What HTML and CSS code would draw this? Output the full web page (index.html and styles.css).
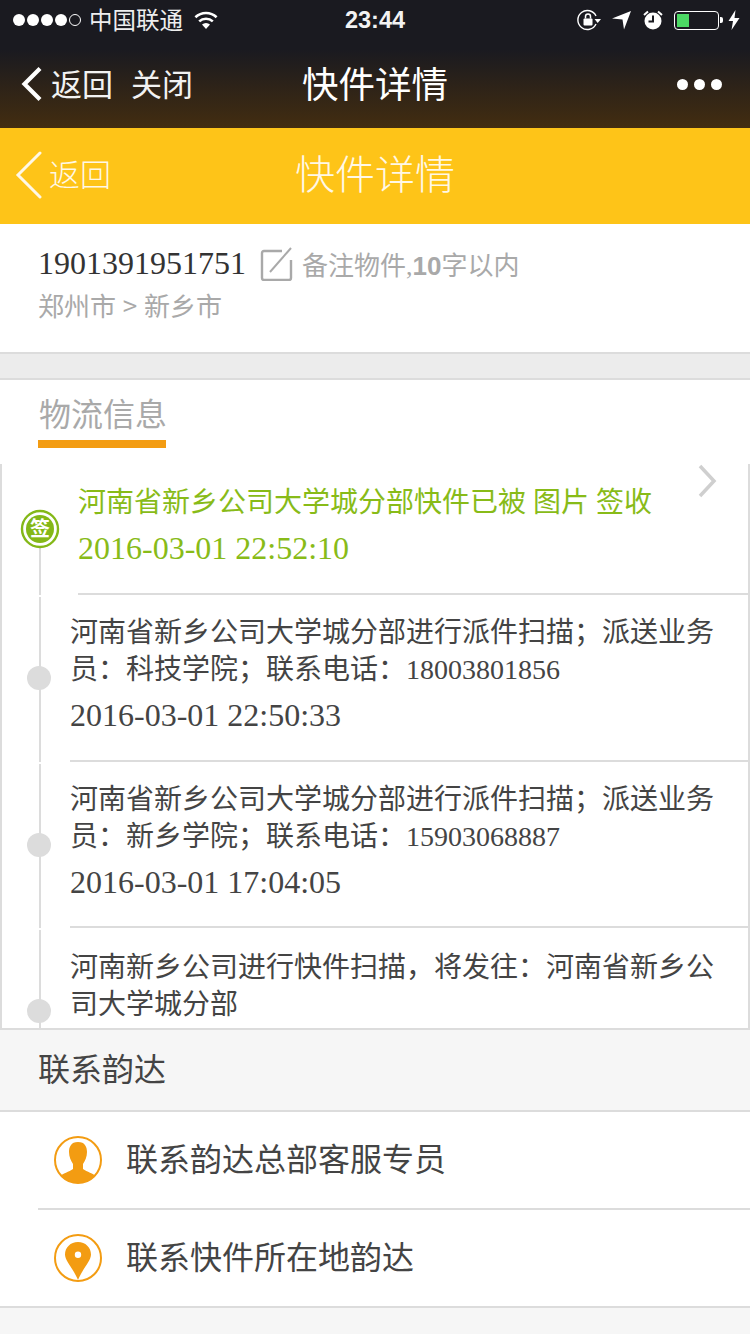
FILE: index.html
```html
<!DOCTYPE html>
<html lang="zh-CN">
<head>
    <meta charset="UTF-8">
    <meta name="viewport" content="width=device-width, initial-scale=1.0">
    <title>快件详情</title>
    <link rel="stylesheet" href="styles.css">
</head>
<body>
    <div class="topbar">
        <div class="statusbar">
            <div class="status-left">
                <span class="signal"><i></i><i></i><i></i><i></i><i class="off"></i></span>
                <span class="carrier">中国联通</span>
                <svg class="wifi" width="26" height="20" viewBox="0 0 26 20"><path d="M13 19 L9 14.5 A6 6 0 0 1 17 14.5 Z" fill="#fff"/><path d="M6.2 11.4 A10 10 0 0 1 19.8 11.4" fill="none" stroke="#fff" stroke-width="2.6"/><path d="M2.4 7.2 A15.5 15.5 0 0 1 23.6 7.2" fill="none" stroke="#fff" stroke-width="2.6"/></svg>
            </div>
            <div class="status-time">23:44</div>
            <div class="status-right">
                <svg width="24" height="22" viewBox="0 0 24 22"><path d="M19 15 A9.5 9.5 0 1 1 19 7" fill="none" stroke="#fff" stroke-width="1.4"/><rect x="6.5" y="9.5" width="9" height="7" rx="1" fill="#fff"/><path d="M8.500 9.500 V7.500 A2.500 2.500 0 0 1 13.500 7.500 V9.500" fill="none" stroke="#fff" stroke-width="1.5"/><path d="M17.500 10 H24 L20.700 14 Z" fill="#fff"/></svg>
                <svg width="20" height="20" viewBox="0 0 20 20"><path d="M0 8.500 L19 1 L12 19.500 L10.500 9.500 Z" fill="#fff"/></svg>
                <svg width="20" height="20" viewBox="0 0 20 20"><circle cx="10" cy="11" r="8.500" fill="#fff"/><path d="M10 5.500 V11.500 H5.500" fill="none" stroke="#1a1a20" stroke-width="2"/><path d="M1 5 L5 1.500 M19 5 L15 1.500" stroke="#fff" stroke-width="2"/></svg>
                <span class="battery"><span class="battery-level"></span></span>
                <svg class="bolt" width="12" height="20" viewBox="0 0 12 20"><path d="M7.500 0 L0.500 11 H5 L3.500 20 L11.500 8 H6.500 Z" fill="#fff"/></svg>
            </div>
        </div>
        <div class="navbar">
            <div class="nav-left">
                <svg width="24" height="36" viewBox="0 0 24 36"><path d="M20 2.500 L4.500 18 L20 33.500" fill="none" stroke="#fff" stroke-width="4.200"/></svg>
                <span class="nav-back">返回</span>
                <span>关闭</span>
            </div>
            <div class="nav-title">快件详情</div>
            <div class="nav-more"><i></i><i></i><i></i></div>
        </div>
    </div>

    <header class="page-header">
        <div class="back-link">
            <svg width="28" height="48" viewBox="0 0 28 48"><path d="M25 2 L3 24 L25 46" fill="none" stroke="#fff8e6" stroke-width="3" stroke-linecap="round"/></svg>
            <span>返回</span>
        </div>
        <h1>快件详情</h1>
    </header>

    <section class="parcel">
        <div class="parcel-line">
            <span class="parcel-no">1901391951751</span>
            <svg class="edit-icon" width="34" height="34" viewBox="0 0 34 34"><path d="M22 4 H4 Q2 4 2 6 V31 Q2 33 4 33 H29 Q31 33 31 31 V13" fill="none" stroke="#a9a9a9" stroke-width="2.400"/><path d="M10 25 L31 1" fill="none" stroke="#a9a9a9" stroke-width="2"/></svg>
            <span class="parcel-note">备注物件,<b>10</b>字以内</span>
        </div>
        <div class="parcel-route">郑州市 &gt; 新乡市</div>
    </section>

    <div class="band"></div>

    <section class="logistics">
        <div class="tab-row"><span class="tab">物流信息</span></div>
        <div class="track">
            <div class="track-item track-first">
                <svg class="sign-icon" width="40" height="40" viewBox="0 0 40 40"><circle cx="20" cy="20" r="18" fill="#fff" stroke="#84b817" stroke-width="2.400"/><circle cx="20" cy="20" r="14" fill="#84b817"/><text x="20" y="27" text-anchor="middle" class="sign-text">签</text></svg>
                <div class="track-body">
                    <p>河南省新乡公司大学城分部快件已被 图片 签收</p>
                    <p class="track-time">2016-03-01 22:52:10</p>
                    <svg class="track-arrow" width="20" height="34" viewBox="0 0 20 34"><path d="M3 2 L17 17 L3 32" fill="none" stroke="#cfcfcf" stroke-width="3.500"/></svg>
                </div>
            </div>
            <div class="track-item">
                <div class="track-body">
                    <p>河南省新乡公司大学城分部进行派件扫描&#xFF1B;派送业务员&#xFF1A;科技学院&#xFF1B;联系电话&#xFF1A;18003801856</p>
                    <p class="track-time">2016-03-01 22:50:33</p>
                </div>
            </div>
            <div class="track-item">
                <div class="track-body">
                    <p>河南省新乡公司大学城分部进行派件扫描&#xFF1B;派送业务员&#xFF1A;新乡学院&#xFF1B;联系电话&#xFF1A;15903068887</p>
                    <p class="track-time">2016-03-01 17:04:05</p>
                </div>
            </div>
            <div class="track-item">
                <div class="track-body">
                    <p>河南新乡公司进行快件扫描&#xFF0C;将发往&#xFF1A;河南省新乡公司大学城分部</p>
                </div>
            </div>
        </div>
    </section>

    <section class="contact">
        <h2>联系韵达</h2>
        <div class="contact-list">
            <div class="contact-row">
                <svg width="48" height="48" viewBox="0 0 48 48"><defs><clipPath id="ring"><circle cx="24" cy="24" r="23"/></clipPath></defs><circle cx="24" cy="24" r="23" fill="#fff" stroke="#f39c12" stroke-width="2"/><g clip-path="url(#ring)"><path d="M24 6 C17 6 15 11 15 16 C15 21 17 25 19 28 V33 C15 36 9 37 5 41 V48 H43 V41 C39 37 33 36 29 33 V28 C31 25 33 21 33 16 C33 11 31 6 24 6 Z" fill="#f39c12"/></g></svg>
                <span>联系韵达总部客服专员</span>
            </div>
            <div class="contact-row">
                <svg width="48" height="48" viewBox="0 0 48 48"><circle cx="24" cy="24" r="23" fill="#fff" stroke="#f39c12" stroke-width="2"/><path fill-rule="evenodd" d="M24 8 C16.500 8 11 13.500 11 20.500 C11 27 19 34 24 46 C29 34 37 27 37 20.500 C37 13.500 31.500 8 24 8 Z M24 17.500 A3.200 3.200 0 1 1 24 23.900 A3.200 3.200 0 1 1 24 17.500 Z" fill="#f39c12"/></svg>
                <span>联系快件所在地韵达</span>
            </div>
        </div>
    </section>
    <div class="page-end"></div>
</body>
</html>
```

FILE: styles.css
```css
:root {
    --yellow: #fec418;
    --orange: #f39c12;
    --green: #88bb18;
    --line: #dcdcdc;
    --text: #444;
    --muted: #a9a9a9;
}

* {
    box-sizing: border-box;
}

html, body {
    height: 100%;
}

body {
    margin: 0;
    display: flex;
    flex-direction: column;
    overflow: hidden;
    background: #fff;
    color: var(--text);
    font-family: "Liberation Serif", "Noto Sans CJK SC", serif;
}

p, h1, h2 {
    margin: 0;
    font-weight: normal;
}

/* Barra superior del navegador */
.topbar {
    height: 128px;
    flex-shrink: 0;
    color: #fff;
    background: linear-gradient(#1a1a20 0, #1a1a20 50px, #432d10 128px);
    font-family: "Liberation Sans", "Noto Sans CJK SC", sans-serif;
}

.statusbar {
    height: 40px;
    padding: 0 10px 0 13px;
    display: grid;
    grid-template-columns: 1fr auto 1fr;
    align-items: center;
}

.status-left, .status-right {
    display: flex;
    align-items: center;
}

.signal {
    display: flex;
    gap: 2px;
}

.signal i {
    width: 12px;
    height: 12px;
    border-radius: 50%;
    background: #fff;
}

.signal i.off {
    background: none;
    border: 1.5px solid #fff;
}

.carrier {
    margin-left: 8px;
    padding-bottom: 2px;
    font-size: 23.5px;
    color: #eee;
}

.wifi {
    margin-left: 10px;
}

.status-time {
    margin-left: -3px;
    font-size: 23.5px;
    font-weight: bold;
    color: #f2f2f2;
}

.status-right {
    justify-content: flex-end;
    gap: 11px;
}

.battery {
    position: relative;
    width: 45px;
    height: 19px;
    padding: 2px;
    border: 1.5px solid #fff;
    border-radius: 4px;
}

.battery::after {
    content: "";
    position: absolute;
    right: -5px;
    top: 5px;
    width: 3px;
    height: 6px;
    background: #fff;
    border-radius: 0 2px 2px 0;
}

.battery-level {
    display: block;
    width: 12px;
    height: 100%;
    background: #4cd964;
}

.bolt {
    margin-left: -2px;
}

.navbar {
    height: 88px;
    padding: 0 28px;
    display: grid;
    grid-template-columns: 1fr auto 1fr;
    align-items: center;
}

.nav-left {
    display: flex;
    align-items: center;
    margin-left: -8px;
    font-size: 31px;
    color: #f2f2f2;
}

.nav-left span {
    padding-bottom: 4px;
}

.nav-back {
    margin: 0 18px 0 7px;
}

.nav-title {
    padding-bottom: 4px;
    font-size: 36.5px;
}

.nav-more {
    justify-self: end;
    display: flex;
    gap: 6px;
}

.nav-more i {
    width: 11px;
    height: 11px;
    border-radius: 50%;
    background: #fff;
}

.page-header {
    position: relative;
    height: 96px;
    flex-shrink: 0;
    display: flex;
    align-items: center;
    justify-content: center;
    background: var(--yellow);
    color: #fff8e6;
    font-family: "Noto Sans CJK SC", sans-serif;
}

.page-header h1 {
    padding-bottom: 8px;
    font-size: 40px;
    font-weight: 300;
}

.back-link {
    position: absolute;
    left: 15px;
    top: 22px;
    display: flex;
    align-items: center;
    gap: 6px;
    font-size: 31px;
    font-weight: 300;
}

.back-link span {
    padding-bottom: 4px;
}

.parcel {
    height: 130px;
    flex-shrink: 0;
    padding: 19px 38px 0;
    border-bottom: 2px solid var(--line);
}

.parcel-line {
    display: flex;
    align-items: center;
    height: 40px;
}

.parcel-no {
    font-size: 32px;
    color: #333;
}

.edit-icon {
    margin: 2px 8px 0 14px;
}

.parcel-note {
    font-size: 26px;
    color: var(--muted);
}

.parcel-note b {
    font-family: "Liberation Sans", sans-serif;
}

.parcel-route {
    margin-top: 5px;
    font-size: 26px;
    line-height: 34px;
    word-spacing: 1px;
    color: var(--muted);
    font-family: "Noto Sans CJK SC", sans-serif;
}

.band {
    height: 24px;
    flex-shrink: 0;
    background: #ececec;
}

.logistics {
    flex-shrink: 0;
    border-top: 2px solid var(--line);
    background: #fff;
}

.tab-row {
    height: 84px;
    padding: 12px 0 0 38px;
}

.tab {
    display: inline-block;
    width: 128px;
    height: 56px;
    border-bottom: 8px solid var(--orange);
    font-size: 32px;
    line-height: 46px;
    color: var(--muted);
    padding-left: 1px;
    white-space: nowrap;
}

.track {
    height: 566px;
    overflow: hidden;
    border: solid var(--line);
    border-width: 0 2px 2px;
}

.track-item {
    position: relative;
    height: 166.5px;
    padding-left: 68px;
}

/* Linea vertical y punto de cada paso */
.track-item::before {
    content: "";
    position: absolute;
    left: 37px;
    top: 2px;
    bottom: 0;
    width: 2px;
    background: var(--line);
}

.track-item::after {
    content: "";
    position: absolute;
    left: 25px;
    top: 71px;
    width: 24px;
    height: 24px;
    border-radius: 50%;
    background: var(--line);
}

.track-first {
    height: 131px;
    padding-left: 76px;
    color: var(--green);
}

.track-first::before {
    top: 84px;
}

.track-first::after {
    display: none;
}

.sign-icon {
    position: absolute;
    left: 18px;
    top: 45px;
}

.sign-text {
    font-size: 20px;
    font-weight: bold;
    fill: #fff;
    font-family: "Noto Sans CJK SC", sans-serif;
}

.track-body {
    position: relative;
    height: 100%;
    padding-top: 19px;
    border-bottom: 2px solid var(--line);
    font-size: 28px;
    line-height: 37px;
}

.track-body p {
    padding-right: 30px;
}

.track-first .track-body {
    padding-top: 20px;
}

.track-item:last-child .track-body {
    padding-top: 21px;
}

.track-body .track-time {
    margin-top: 9px;
    font-size: 32px;
}

.track-arrow {
    position: absolute;
    right: 31px;
    top: 0;
}

.contact {
    flex-shrink: 0;
}

.contact h2 {
    height: 82px;
    padding: 0 38px;
    font-size: 32px;
    line-height: 74px;
    background: #f6f6f6;
    border-bottom: 2px solid var(--line);
    font-family: "Noto Sans CJK SC", sans-serif;
}

.contact-list {
    padding-left: 38px;
    border-bottom: 2px solid var(--line);
}

.contact-row {
    height: 98px;
    padding-left: 16px;
    display: flex;
    align-items: center;
    gap: 24px;
    font-size: 32px;
    border-bottom: 2px solid var(--line);
}

.contact-row span {
    padding-bottom: 6px;
}

.contact-row:last-child {
    height: 96px;
    border-bottom: none;
}

.page-end {
    flex-grow: 1;
    background: #f6f6f6;
}
```
